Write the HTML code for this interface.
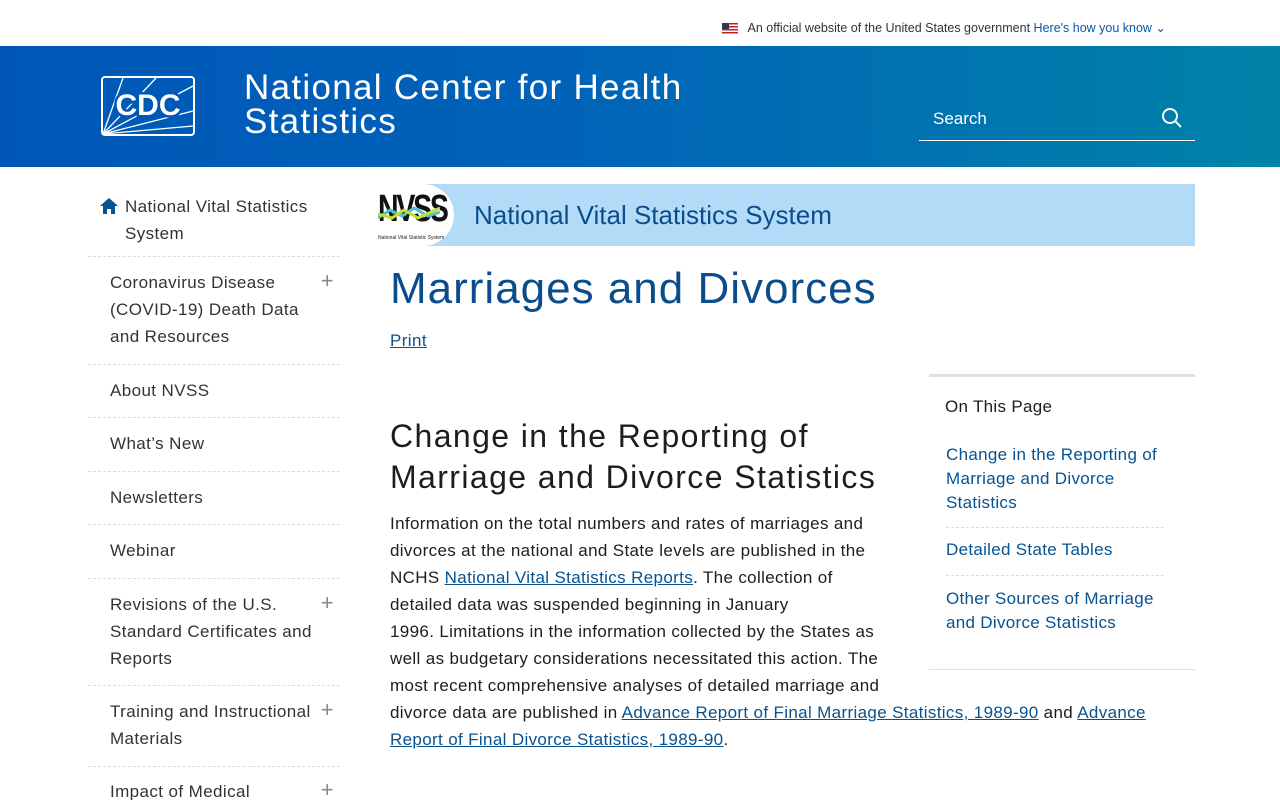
<!DOCTYPE html>
<html><head><meta charset="utf-8"><style>
*{box-sizing:border-box;margin:0;padding:0}
html,body{width:1280px;height:800px;overflow:hidden}
body{font-family:"Liberation Sans",sans-serif;color:#1c1d1f;background:#fff;position:relative}
.abs{position:absolute}
a{color:#075290;text-decoration:underline}
.top{height:46px;font-size:12.5px;color:#333}
.hdr{top:46px;left:0;width:1280px;height:121px;background:linear-gradient(90deg,#0057b7 0%,#0063b8 45%,#0083a8 100%)}
.nav div{position:absolute;left:88px;width:252px;border-bottom:1px dashed #ddd;font-size:17px;line-height:27px;color:#333;padding-left:22px;letter-spacing:.4px}
.plus{position:absolute;right:6px;top:-2px;color:#888;font-size:22px;font-weight:300}
.p{font-size:17px;line-height:27px;color:#1c1d1f;letter-spacing:.35px}
.otp a{text-decoration:none;color:#075290;font-size:17px;line-height:24px;letter-spacing:.3px}
</style></head><body>
<div class="abs top" style="left:722px;top:20px;width:480px">
<span style="display:inline-block;width:16px;height:11px;background:repeating-linear-gradient(#b22 0 1.5px,#fff 1.5px 3px);vertical-align:middle;position:relative"><span style="position:absolute;left:0;top:0;width:7px;height:6px;background:#335"></span></span>
<span style="margin-left:6px">An official website of the United States government</span> <span style="color:#0a57a8">Here's how you know ⌄</span></div>
<div class="abs hdr">
<svg class="abs" style="left:101px;top:30px" width="94" height="60" viewBox="0 0 94 60"><rect x="1" y="1" width="92" height="58" rx="3" fill="none" stroke="#fff" stroke-width="2"/><g stroke="#fff" stroke-width="1.3"><line x1="2" y1="58" x2="22" y2="2"/><line x1="2" y1="58" x2="55" y2="2"/><line x1="2" y1="58" x2="92" y2="10"/><line x1="2" y1="58" x2="92" y2="35"/><line x1="2" y1="58" x2="92" y2="50"/></g><text x="47" y="39" fill="#fff" font-family="Liberation Sans" font-weight="bold" font-size="30" text-anchor="middle" stroke="#0057b7" stroke-width="5" style="paint-order:stroke">CDC</text></svg>
<div class="abs" style="left:244px;top:25px;color:#fff;font-size:35px;line-height:34px;letter-spacing:1.3px">National Center for Health<br>Statistics</div>
<div class="abs" style="left:919px;top:58px;width:276px;height:37px;border-bottom:1.5px solid #fff;color:#fff;font-size:17px;padding:5px 14px">Search
<svg class="abs" style="right:12px;top:3px" width="22" height="22" viewBox="0 0 22 22"><circle cx="9" cy="9" r="7" fill="none" stroke="#fff" stroke-width="2"/><line x1="14" y1="14" x2="20" y2="20" stroke="#fff" stroke-width="2"/></svg></div>
</div>
<div class="nav">
<div style="top:193px;height:64px;padding-left:37px"><svg class="abs" style="left:11px;top:4px" width="20" height="18" viewBox="0 0 20 18"><path d="M10 1 L1 9 H4 V17 H8 V12 H12 V17 H16 V9 H19 Z" fill="#075290"/></svg>National Vital Statistics<br>System</div>
<div style="top:269px;height:96px">Coronavirus Disease<br>(COVID-19) Death Data<br>and Resources<span class="plus">+</span></div>
<div style="top:377px;height:41px">About NVSS</div>
<div style="top:430px;height:42px">What’s New</div>
<div style="top:484px;height:41px">Newsletters</div>
<div style="top:537px;height:42px">Webinar</div>
<div style="top:591px;height:95px">Revisions of the U.S.<br>Standard Certificates and<br>Reports<span class="plus">+</span></div>
<div style="top:698px;height:69px">Training and Instructional<br>Materials<span class="plus">+</span></div>
<div style="top:778px;height:40px;border:0">Impact of Medical<span class="plus">+</span></div>
</div>
<div class="abs" style="left:370px;top:184px;width:825px;height:62px;background:#b3dbf8">
<div class="abs" style="left:0;top:0;width:84px;height:62px;background:#fff;border-radius:0 31px 31px 0"></div>
<div class="abs" style="left:8px;top:4px;font-family:'Liberation Sans';font-weight:bold;font-size:38px;letter-spacing:-3px;color:#111;transform:scaleX(.75);transform-origin:left">NVSS</div>
<svg class="abs" style="left:8px;top:20px" width="62" height="20"><polyline points="0,14 12,6 24,12 36,4 50,12 62,8" fill="none" stroke="#4bc2cc" stroke-width="3"/><polyline points="0,10 14,14 26,6 40,14 62,4" fill="none" stroke="#c9dd30" stroke-width="3"/></svg>
<div class="abs" style="left:8px;top:51px;font-size:5px">National Vital Statistic System</div>
<div class="abs" style="left:104px;top:16px;font-size:26px;color:#0b4d8c">National Vital Statistics System</div>
</div>
<div class="abs" style="left:390px;top:264px;font-size:44px;color:#0b4d8c;letter-spacing:1px">Marriages and Divorces</div>
<a class="abs" style="left:390px;top:331px;font-size:17px;letter-spacing:.4px">Print</a>
<div class="abs" style="left:929px;top:374px;width:266px;height:296px;border-top:3px solid #e0e0e0;border-bottom:1px solid #e0e0e0">
<div style="position:absolute;left:16px;top:20px;font-size:17px;letter-spacing:.3px">On This Page</div>
<div class="otp" style="position:absolute;left:17px;top:66px;width:218px">
<div style="border-bottom:1px dashed #ddd;padding-bottom:12px"><a>Change in the Reporting of Marriage and Divorce Statistics</a></div>
<div style="border-bottom:1px dashed #ddd;padding:10px 0 13px"><a>Detailed State Tables</a></div>
<div style="padding-top:11px"><a>Other Sources of Marriage and Divorce Statistics</a></div>
</div></div>
<div class="abs" style="left:390px;top:416px;font-size:32px;line-height:41px;color:#1c1d1f;letter-spacing:1.4px">Change in the Reporting of<br>Marriage and Divorce Statistics</div>
<div class="abs p" style="left:390px;top:510px;width:510px">Information on the total numbers and rates of marriages and divorces at the national and State levels are published in the NCHS <a>National Vital Statistics Reports</a>. The collection of detailed data was suspended beginning in January<br>1996. Limitations in the information collected by the States as well as budgetary considerations necessitated this action. The most recent comprehensive analyses of detailed marriage and</div>
<div class="abs p" style="left:390px;top:699px;width:800px">divorce data are published in <a>Advance Report of Final Marriage Statistics, 1989-90</a> and <a>Advance</a><br><a>Report of Final Divorce Statistics, 1989-90</a>.</div>
</body></html>
